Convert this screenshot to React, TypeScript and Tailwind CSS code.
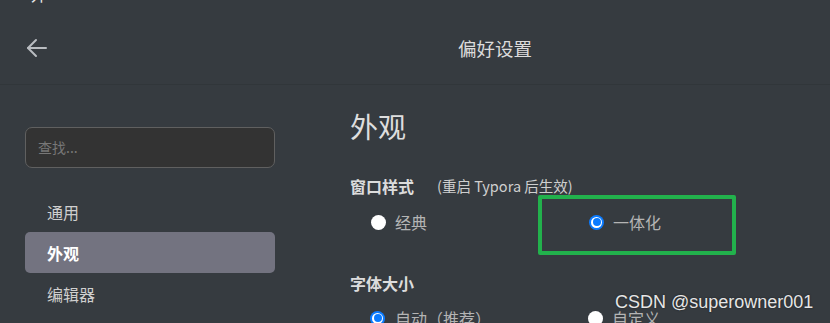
import React from "react";

const cjk = { fontFamily: '"Noto Sans CJK SC", "Noto Sans", sans-serif' };

function Radio({ checked }: { checked?: boolean }) {
  if (checked) {
    return (
      <span className="flex h-[15px] w-[15px] items-center justify-center rounded-full bg-[#0b7bff]">
        <span className="flex h-[11px] w-[11px] items-center justify-center rounded-full bg-white">
          <span className="h-[8px] w-[8px] rounded-full bg-[#0b7bff]" />
        </span>
      </span>
    );
  }
  return <span className="h-[15px] w-[15px] rounded-full bg-white" />;
}

export default function App() {
  return (
    <div className="relative h-[323px] w-[830px] overflow-hidden bg-[#363b40] text-[#d0d0d0]" style={cjk}>
      {/* cut-off window title */}
      <div className="h-[5px] overflow-hidden pl-[31px]">
        <div className="-mt-[15px] text-[16px] leading-[18px] text-[#e8e8e8]">外</div>
      </div>

      {/* header */}
      <div className="flex h-[80px] items-center border-b border-[#31363a] px-[26px] pt-[6px]">
        <svg width="21" height="20" viewBox="0 0 21 20" fill="none" stroke="#b9bcc0" strokeWidth="2" strokeLinecap="round" strokeLinejoin="round">
          <path d="M20 10H2" />
          <path d="M10 2L2 10L10 18" />
        </svg>
        <div className="ml-[411px] text-[18.5px] leading-[24px] text-[#dcdcdc]">偏好设置</div>
      </div>

      <div className="flex">
        {/* sidebar */}
        <div className="w-[300px] shrink-0 px-[25px] pt-[42px]">
          <div className="flex h-[41px] items-center rounded-[7px] border border-[#606060] bg-[#333333] px-[12px] text-[14px] text-[#777777]">
            查找...
          </div>
          <div className="mt-[23px] flex flex-col">
            <div className="flex h-[41px] items-center px-[22px] text-[16px] text-[#cfcfcf]">通用</div>
            <div className="flex h-[41px] items-center rounded-[5px] bg-[#737380] px-[22px] text-[16px] font-bold text-white">外观</div>
            <div className="flex h-[41px] items-center px-[22px] text-[16px] text-[#cfcfcf]">编辑器</div>
          </div>
        </div>

        {/* main */}
        <div className="flex-1 pl-[50px] pt-[20px]">
          <div className="text-[28px] leading-[42px] text-[#dedede]">外观</div>
          <div className="mt-[27px] flex items-center leading-[24px]">
            <span className="text-[16px] font-bold text-[#dcdcdc]">窗口样式</span>
            <span className="ml-[23px] text-[14.5px] text-[#cfcfcf]">(重启 Typora 后生效)</span>
          </div>
          <div className="mt-[12px] grid grid-cols-[218px_218px] pl-[21px] leading-[24px]">
            <div className="flex items-center gap-[9px]">
              <Radio />
              <span className="text-[16px] text-[#b4b4b4]">经典</span>
            </div>
            <div className="flex items-center gap-[9px]">
              <Radio checked />
              <span className="text-[16px] text-[#b4b4b4]">一体化</span>
            </div>
          </div>
          <div className="mt-[37px] text-[16px] font-bold leading-[24px] text-[#dcdcdc]">字体大小</div>
          <div className="mt-[11px] grid grid-cols-[218px_218px] pl-[20px] leading-[24px]">
            <div className="flex items-center gap-[10px]">
              <Radio checked />
              <span className="text-[16px] text-[#b4b4b4]">自动（推荐）</span>
            </div>
            <div className="flex items-center gap-[9px]">
              <Radio />
              <span className="text-[16px] text-[#b4b4b4]">自定义</span>
            </div>
          </div>
        </div>
      </div>

      {/* annotation box */}
      <div className="absolute left-[538px] top-[195px] h-[60px] w-[198px] rounded-[2px] border-[4px] border-[#22b14c]" />

      {/* watermark */}
      <div
        className="absolute left-[615px] top-[290px] text-[18px] leading-[24px] text-[#e6e6e6]"
        style={{ fontFamily: '"Liberation Sans", Arial, sans-serif', textShadow: "0 0 2px rgba(0,0,0,0.6)" }}
      >
        CSDN @superowner001
      </div>
    </div>
  );
}
